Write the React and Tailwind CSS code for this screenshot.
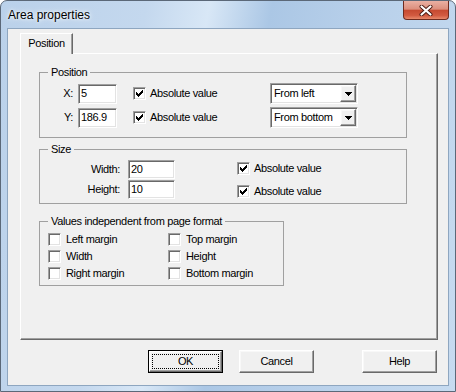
const sunken =
  'border border-t-[#a0a0a0] border-l-[#a0a0a0] border-b-white border-r-white shadow-[inset_1px_1px_0_#696969,inset_-1px_-1px_0_#e3e3e3]'
const raised =
  'border border-t-white border-l-white border-b-[#696969] border-r-[#696969] shadow-[inset_-1px_-1px_0_#a0a0a0,inset_1px_1px_0_#f8f8f8]'

function Check({ checked }) {
  return (
    <span className={`w-[13px] h-[13px] shrink-0 bg-white flex items-center justify-center ${sunken}`}>
      {checked && (
        <svg width="7" height="7" viewBox="0 0 7 7" shapeRendering="crispEdges">
          <rect x="6" y="0" width="1" height="1" />
          <rect x="5" y="1" width="2" height="1" />
          <rect x="0" y="2" width="1" height="1" />
          <rect x="4" y="2" width="3" height="1" />
          <rect x="0" y="3" width="2" height="1" />
          <rect x="3" y="3" width="3" height="1" />
          <rect x="0" y="4" width="5" height="1" />
          <rect x="1" y="5" width="3" height="1" />
          <rect x="2" y="6" width="1" height="1" />
        </svg>
      )}
    </span>
  )
}

function CheckLabel({ checked, label, gap = 'gap-[4px]' }) {
  return (
    <div className={`flex items-center h-[13px] ${gap}`}>
      <Check checked={checked} />
      <span>{label}</span>
    </div>
  )
}

function TextBox({ value, className }) {
  return (
    <div className={`bg-white flex items-center pl-[2px] ${sunken} ${className}`}>
      {value}
    </div>
  )
}

function Combo({ value }) {
  return (
    <div className={`w-[88px] h-[21px] bg-white flex items-center ${sunken} p-[1px]`}>
      <span className="flex-1 pl-[2px]">{value}</span>
      <span className={`w-[16px] h-[17px] bg-[#f0f0f0] flex items-center justify-center ${raised}`}>
        <svg width="7" height="4" viewBox="0 0 7 4" shapeRendering="crispEdges">
          <path d="M0 0h7v1H0zM1 1h5v1H1zM2 2h3v1H2zM3 3h1v1H3z" fill="#000" />
        </svg>
      </span>
    </div>
  )
}

function Group({ title, className, children }) {
  return (
    <fieldset className={`border border-[#a0a0a0] ${className}`}>
      <legend className="ml-[8px] px-[3px] leading-[13px]">{title}</legend>
      {children}
    </fieldset>
  )
}

function Button({ label, isDefault }) {
  if (isDefault) {
    return (
      <div className="w-[75px] h-[23px] border border-[#000] flex">
        <div className={`flex-1 flex p-[2px] ${raised}`}>
          <span className="flex-1 border border-dotted border-black flex items-center justify-center">
            {label}
          </span>
        </div>
      </div>
    )
  }
  return (
    <div className={`w-[75px] h-[23px] flex items-center justify-center ${raised}`}>{label}</div>
  )
}

export default function App() {
  return (
    <div className="w-[456px] h-[392px] overflow-hidden rounded-t-[7px] border border-[#5b6878] bg-[linear-gradient(100deg,#bad1ea_0%,#c4d8ee_28%,#d8e7f6_40%,#abc7e5_52%,#b8d0ea_70%,#c7dbf0_100%)] flex flex-col font-['Liberation_Sans',Arial,sans-serif] text-black">
      <div className="h-[27px] flex items-start shrink-0">
        <span className="self-center pl-[7px] pt-[1px] text-[12px] [text-shadow:0_0_6px_#fff,0_0_3px_#fff]">
          Area properties
        </span>
        <div className="ml-auto mr-[6px] w-[46px] h-[19px] border border-t-0 border-[#6e2b1f] rounded-b-[4px] bg-[linear-gradient(to_bottom,#eab0a3_0%,#dc8f7d_45%,#c64a31_52%,#d25a40_80%,#e8896b_100%)] flex items-center justify-center">
          <svg width="14" height="11" viewBox="0 0 14 11">
            <path d="M2.5 1.5L11.5 9.5M11.5 1.5L2.5 9.5" stroke="#4a1a12" strokeWidth="4" strokeLinecap="round" />
            <path d="M2.5 1.5L11.5 9.5M11.5 1.5L2.5 9.5" stroke="#fff" strokeWidth="2.2" strokeLinecap="round" />
          </svg>
        </div>
      </div>

      <div className="mx-[6px] h-[358px] border border-[#8ea6c0] bg-[#f0f0f0] text-[11px] leading-[13px] tracking-[-0.35px] flex flex-col">
        <div className="pt-[4px] pl-[12px] flex">
          <div className="relative z-10 -mb-[1px] w-[53px] h-[21px] bg-[#f0f0f0] border-l border-t border-r border-l-white border-t-white border-r-[#696969] shadow-[inset_-1px_0_0_#a0a0a0] flex items-center justify-center pb-[1px]">
            Position
          </div>
        </div>

        <div className="ml-[12px] w-[418px] h-[287px] border border-t-white border-l-white border-b-[#696969] border-r-[#696969] shadow-[inset_-1px_-1px_0_#a0a0a0] pl-[18px] pt-[12px] flex flex-col">
          <Group title="Position" className="w-[368px] h-[72px]">
            <div className="pt-[4px] flex flex-col gap-[3px]">
              {[
                ['X:', '5', 'From left'],
                ['Y:', '186.9', 'From bottom'],
              ].map(([l, v, c]) => (
                <div key={l} className="h-[21px] flex items-center">
                  <span className="w-[33px] text-right">{l}</span>
                  <TextBox value={v} className="ml-[5px] w-[39px] h-[20px]" />
                  <div className="w-[153px] pl-[16px]">
                    <CheckLabel checked label="Absolute value" />
                  </div>
                  <Combo value={c} />
                </div>
              ))}
            </div>
          </Group>

          <Group title="Size" className="mt-[5px] w-[368px] h-[61px]">
            <div className="flex">
              <div className="pt-[4px] flex flex-col gap-[1px]">
                {[
                  ['Width:', '20'],
                  ['Height:', '10'],
                ].map(([l, v]) => (
                  <div key={l} className="h-[19px] flex items-center">
                    <span className="w-[80px] text-right">{l}</span>
                    <TextBox value={v} className="ml-[8px] w-[47px] h-[19px]" />
                  </div>
                ))}
              </div>
              <div className="ml-[62px] pt-[6px] flex flex-col gap-[10px]">
                <CheckLabel checked label="Absolute value" />
                <CheckLabel checked label="Absolute value" />
              </div>
            </div>
          </Group>

          <Group title="Values independent from page format" className="mt-[11px] w-[245px] h-[71px]">
            <div className="pt-[5px] pl-[8px] grid grid-cols-[120px_auto] gap-y-[4px]">
              {['Left margin', 'Top margin', 'Width', 'Height', 'Right margin', 'Bottom margin'].map((l) => (
                <CheckLabel key={l} label={l} gap="gap-[5px]" />
              ))}
            </div>
          </Group>
        </div>

        <div className="mt-[10px] pl-[140px] flex gap-[16px]">
          <Button label="OK" isDefault />
          <Button label="Cancel" />
          <div className="ml-[32px]">
            <Button label="Help" />
          </div>
        </div>
      </div>
    </div>
  )
}
